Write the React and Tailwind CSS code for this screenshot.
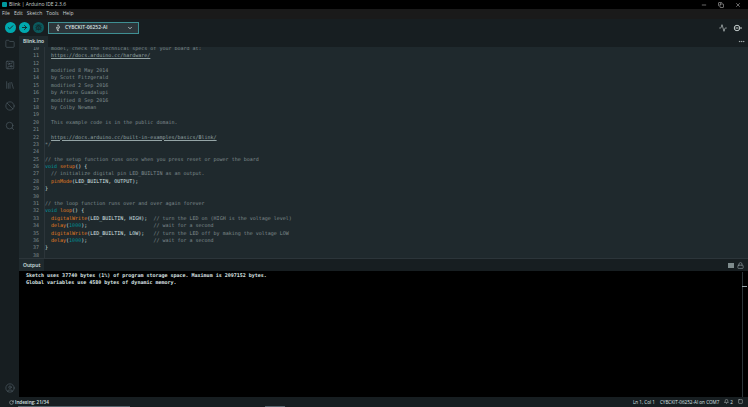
import { Folder, CircuitBoard, Library, Ban, Search, CircleUser, Check, ArrowRight, Bug, Usb, Activity, Lock, Minus, X, Copy, MoreHorizontal, RotateCw, Bell, Square, ChevronDown } from 'lucide-react';

const c = (t) => <span className="text-[#7f8c8d]">{t}</span>;
const o = (t) => <span className="text-[#e67e22]">{t}</span>;
const k = (t) => <span className="text-[#00979d]">{t}</span>;
const n = (t) => <span className="text-[#008b8f]">{t}</span>;
const u = (t) => <span className="text-[#95a5a6] underline">{t}</span>;

const lines = [
  [10, c('  model, check the technical specs of your board at:')],
  [11, <>{'  '}{u('https://docs.arduino.cc/hardware/')}</>],
  [12, ''],
  [13, c('  modified 8 May 2014')],
  [14, c('  by Scott Fitzgerald')],
  [15, c('  modified 2 Sep 2016')],
  [16, c('  by Arturo Guadalupi')],
  [17, c('  modified 8 Sep 2016')],
  [18, c('  by Colby Newman')],
  [19, ''],
  [20, c('  This example code is in the public domain.')],
  [21, ''],
  [22, <>{'  '}{u('https://docs.arduino.cc/built-in-examples/basics/Blink/')}</>],
  [23, c('*/')],
  [24, ''],
  [25, c('// the setup function runs once when you press reset or power the board')],
  [26, <>{k('void')} {o('setup')}() {'{'}</>],
  [27, c('  // initialize digital pin LED_BUILTIN as an output.')],
  [28, <>{'  '}{o('pinMode')}(LED_BUILTIN, OUTPUT);</>],
  [29, '}'],
  [30, ''],
  [31, c('// the loop function runs over and over again forever')],
  [32, <>{k('void')} {o('loop')}() {'{'}</>],
  [33, <>{'  '}{o('digitalWrite')}(LED_BUILTIN, HIGH);{'  '}{c('// turn the LED on (HIGH is the voltage level)')}</>],
  [34, <>{'  '}{o('delay')}({n('1000')});{'                      '}{c('// wait for a second')}</>],
  [35, <>{'  '}{o('digitalWrite')}(LED_BUILTIN, LOW);{'   '}{c('// turn the LED off by making the voltage LOW')}</>],
  [36, <>{'  '}{o('delay')}({n('1000')});{'                      '}{c('// wait for a second')}</>],
  [37, '}'],
  [38, ''],
];

const sideIcons = [Folder, CircuitBoard, Library, Ban, Search];

// serial monitor: circle with a dash either side
function SerialMonitor() {
  return (
    <svg width="9" height="8" viewBox="0 0 18 16" fill="none" stroke="currentColor" strokeWidth="2">
      <circle cx="8" cy="8" r="5.5" />
      <path d="M5 8h6M14 8h4" />
    </svg>
  );
}

export default function App() {
  return (
    <div className="w-[748px] h-[407px] overflow-hidden flex flex-col bg-black text-[#dae3e3] font-['Open_Sans',sans-serif]">
      {/* title bar */}
      <div className="h-[9px] shrink-0 bg-black flex items-center pl-[2px]">
        <span className="w-[5px] h-[5px] bg-[#00979d] rounded-[1px] mr-[2px]" />
        <span className="text-[5px] leading-[9px] text-[#c8d0d0]">Blink | Arduino IDE 2.3.6</span>
        <div className="ml-auto flex items-center gap-[11px] pr-[7px] text-[#d0d0d0]">
          <Minus size={6} />
          <Copy size={6} />
          <X size={6} />
        </div>
      </div>
      {/* menu */}
      <div className="h-[10px] shrink-0 bg-[#1a1a1a] flex items-center gap-[4px] pl-[2px] text-[5px] text-[#c8d0d0]">
        <span>File</span><span>Edit</span><span>Sketch</span><span>Tools</span><span>Help</span>
      </div>
      {/* toolbar */}
      <div className="h-[17px] shrink-0 bg-[#171e21] flex items-center pl-[5px] pr-[6px]">
        <div className="w-[11px] h-[11px] rounded-full bg-[#00a8ae] flex items-center justify-center"><Check size={7} strokeWidth={3} className="text-[#171e21]" /></div>
        <div className="w-[11px] h-[11px] rounded-full bg-[#00a8ae] flex items-center justify-center ml-[3px]"><ArrowRight size={7} strokeWidth={3} className="text-[#171e21]" /></div>
        <div className="w-[11px] h-[11px] rounded-full bg-[#0b5a5e] flex items-center justify-center ml-[3px]"><Bug size={7} className="text-[#171e21]" /></div>
        <div className="ml-[4px] w-[91px] h-[12px] border border-[#3f8f93] bg-[#2c353a] flex items-center pl-[6px] pr-[5px]">
          <Usb size={6} className="text-[#dae3e3] rotate-[-45deg]" />
          <span className="ml-[4px] text-[5px] font-semibold text-[#dae3e3]">CYBCKIT-06252-AI</span>
          <ChevronDown size={6} strokeWidth={3} className="ml-auto text-[#dae3e3]" />
        </div>
        <div className="ml-auto flex items-center gap-[6px] text-[#c5cdcd]">
          <Activity size={8} />
          <SerialMonitor />
        </div>
      </div>
      <div className="flex-1 min-h-0 flex">
        {/* sidebar */}
        <div className="w-[19px] shrink-0 bg-[#171e21] flex flex-col items-center pt-[3px] pb-[4px]">
          <div className="flex flex-col gap-[10.5px] text-[#55626a]">
            {sideIcons.map((Icon, i) => <Icon key={i} size={10} strokeWidth={1.4} />)}
          </div>
          <CircleUser size={10} strokeWidth={1.4} className="mt-auto text-[#55626a]" />
        </div>
        <div className="flex-1 min-w-0 flex flex-col">
          {/* tabs */}
          <div className="h-[11px] shrink-0 bg-[#171e21] flex items-center justify-between pr-[3px]">
            <span className="h-[11px] px-[4px] bg-[#1f292d] text-[5px] leading-[10px] font-semibold text-[#dae3e3]">Blink.ino</span>
            <MoreHorizontal size={7} className="text-[#c5cdcd]" />
          </div>
          {/* editor */}
          <div className="h-[211px] shrink-0 bg-[#1f292d] overflow-hidden font-['DejaVu_Sans_Mono',monospace] text-[5px] leading-[7.4px] text-[#dae3e3]">
            <div className="-mt-[2.2px]">
              {lines.map(([num, text]) => (
                <div key={num} className="h-[7.4px] flex">
                  <span className="w-[20px] text-right text-[#7f8c8d] shrink-0">{num}</span>
                  <span className="w-[6px] shrink-0 border-r border-[#2c353a]" />
                  <span className="whitespace-pre">{text}</span>
                </div>
              ))}
            </div>
          </div>
          {/* output header */}
          <div className="h-[13px] shrink-0 bg-[#171e21] border-t border-[#2c353a] flex items-center justify-between pr-[4px]">
            <span className="h-[12px] px-[4px] text-[5px] leading-[12px] font-semibold text-[#dae3e3] bg-[#1f292d]">Output</span>
            <div className="flex items-center gap-[3px] text-[#97a3a8]">
              <span className="w-[6px] h-[5px] bg-[#7f8c8d]" />
              <Lock size={7} />
            </div>
          </div>
          {/* output */}
          <div className="flex-1 min-h-0 bg-black pl-[7px] pt-[1px] font-['DejaVu_Sans_Mono',monospace] text-[5px] leading-[7.4px] font-bold text-[#dae3e3] whitespace-pre flex">
            <div>
              <div>Sketch uses 37740 bytes (1%) of program storage space. Maximum is 2097152 bytes.</div>
              <div>Global variables use 4580 bytes of dynamic memory.</div>
            </div>
            <div className="ml-auto mr-[5px] w-px bg-[#2c353a] relative">
              <span className="absolute left-0 top-[14px] w-[5px] h-px bg-[#97a3a8]" />
            </div>
          </div>
        </div>
      </div>
      {/* status bar */}
      <div className="h-[10px] shrink-0 bg-[#171e21] relative flex items-center pl-[9px] pr-[5px] text-[4.6px] text-[#dae3e3]">
        <RotateCw size={5} />
        <span className="ml-[1px] font-semibold">Indexing: 21/34</span>
        <div className="ml-auto flex items-center gap-[5px]">
          <span>Ln 1, Col 1</span>
          <span>CYBCKIT-06252-AI on COM7</span>
          <span className="flex items-center gap-[1px]"><Bell size={5} />2</span>
          <Square size={5} />
        </div>
        <span className="absolute left-[18px] bottom-0 w-[112px] h-[1px] bg-[#55626a]" />
        <span className="absolute left-[265px] bottom-0 w-[20px] h-[1px] bg-[#55626a]" />
      </div>
    </div>
  );
}
